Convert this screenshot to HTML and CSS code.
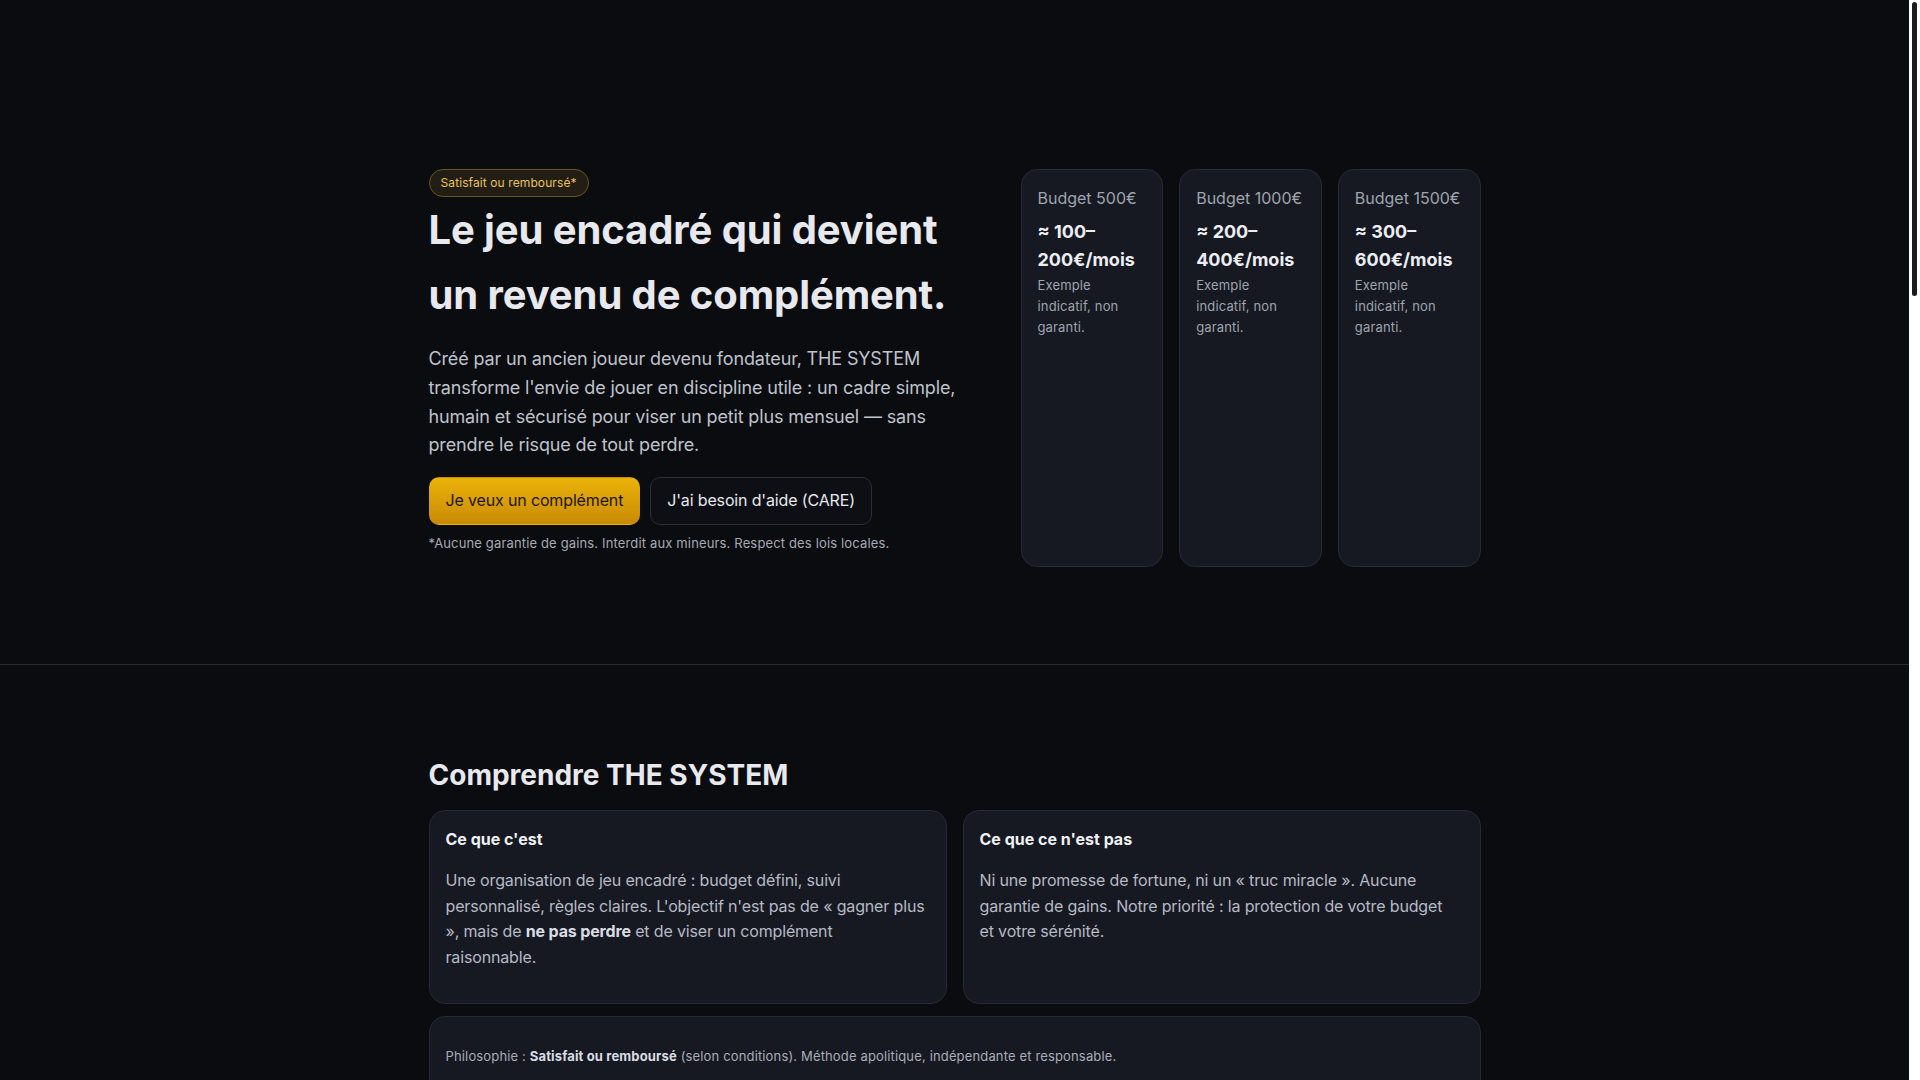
FILE: index.html
```html
<!DOCTYPE html>
<html lang="fr">
<head>
<meta charset="utf-8">
<title>THE SYSTEM — Le jeu encadré</title>
<link rel="stylesheet" href="styles.css">
</head>
<body>
<div class="scrollbar" aria-hidden="true"><div class="scrollbar-thumb"></div></div>
<main class="page">
  <section class="hero">
    <div class="container hero-grid">
      <div class="hero-copy">
        <span class="badge">Satisfait ou remboursé*</span>
        <h1>Le jeu encadré qui devient un revenu de complément.</h1>
        <p class="lead">Créé par un ancien joueur devenu fondateur, THE SYSTEM transforme l'envie de jouer en discipline utile : un cadre simple, humain et sécurisé pour viser un petit plus mensuel — sans prendre le risque de tout perdre.</p>
        <div class="actions">
          <a class="btn btn-primary" href="#offres">Je veux un complément</a>
          <a class="btn btn-ghost" href="#care">J'ai besoin d'aide (CARE)</a>
        </div>
        <p class="fine">*Aucune garantie de gains. Interdit aux mineurs. Respect des lois locales.</p>
      </div>
      <div class="budgets">
        <div class="budget-card">
          <div class="b-label">Budget 500€</div>
          <div class="b-value">≈ 100–200€/mois</div>
          <div class="b-note">Exemple indicatif, non garanti.</div>
        </div>
        <div class="budget-card">
          <div class="b-label">Budget 1000€</div>
          <div class="b-value">≈ 200–400€/mois</div>
          <div class="b-note">Exemple indicatif, non garanti.</div>
        </div>
        <div class="budget-card">
          <div class="b-label">Budget 1500€</div>
          <div class="b-value">≈ 300–600€/mois</div>
          <div class="b-note">Exemple indicatif, non garanti.</div>
        </div>
      </div>
    </div>
  </section>

  <section class="section">
    <div class="container">
      <h2>Comprendre THE SYSTEM</h2>
      <div class="two-col">
        <article class="card">
          <h3>Ce que c'est</h3>
          <p>Une organisation de jeu encadré : budget défini, suivi personnalisé, règles claires. L'objectif n'est pas de « gagner plus », mais de <strong>ne pas perdre</strong> et de viser un complément raisonnable.</p>
        </article>
        <article class="card">
          <h3>Ce que ce n'est pas</h3>
          <p>Ni une promesse de fortune, ni un « truc miracle ». Aucune garantie de gains. Notre priorité : la protection de votre budget et votre sérénité.</p>
        </article>
      </div>
      <div class="card note">
        <p>Philosophie : <strong>Satisfait ou remboursé</strong> (selon conditions). Méthode apolitique, indépendante et responsable.</p>
      </div>
    </div>
  </section>

  <section class="section">
    <div class="container">
      <h2>Comment ça marche</h2>
      <div class="three-col">
        <article class="card">
          <h3>1. Échange</h3>
          <p>Un premier appel pour comprendre votre situation, vos habitudes et définir un budget que vous pouvez vous permettre.</p>
        </article>
        <article class="card">
          <h3>2. Cadre</h3>
          <p>Des règles simples et écrites : mises plafonnées, pauses obligatoires, objectifs mensuels raisonnables.</p>
        </article>
        <article class="card">
          <h3>3. Suivi</h3>
          <p>Un point régulier avec votre accompagnant pour ajuster, prendre du recul et garder le contrôle.</p>
        </article>
      </div>
    </div>
  </section>

  <section class="section" id="offres">
    <div class="container">
      <h2>Les formules</h2>
      <div class="three-col">
        <article class="card">
          <h3>Découverte</h3>
          <p>Budget conseillé : 500€. Suivi mensuel, règles de base et accès à la communauté.</p>
        </article>
        <article class="card">
          <h3>Essentiel</h3>
          <p>Budget conseillé : 1000€. Suivi bimensuel, tableau de bord personnel et alertes de dépassement.</p>
        </article>
        <article class="card">
          <h3>Sérénité</h3>
          <p>Budget conseillé : 1500€. Suivi hebdomadaire, accompagnement prioritaire et bilan trimestriel.</p>
        </article>
      </div>
      <div class="card note">
        <p>Les montants sont des exemples indicatifs. <strong>Aucune garantie de gains.</strong> Ne jouez jamais l'argent dont vous avez besoin.</p>
      </div>
    </div>
  </section>

  <section class="section">
    <div class="container">
      <h2>Ils témoignent</h2>
      <div class="three-col">
        <article class="card">
          <h3>Karim, 34 ans</h3>
          <p>« Avant, je jouais sans limite. Aujourd'hui j'ai un budget fixe et je sais exactement où j'en suis chaque mois. »</p>
        </article>
        <article class="card">
          <h3>Sophie, 41 ans</h3>
          <p>« Le suivi m'a aidée à prendre du recul. Je joue moins, mais mieux, et surtout sans stress. »</p>
        </article>
        <article class="card">
          <h3>Julien, 29 ans</h3>
          <p>« Des règles claires, un accompagnant à l'écoute. Le petit complément est un bonus, pas une obsession. »</p>
        </article>
      </div>
    </div>
  </section>

  <section class="section" id="care">
    <div class="container">
      <h2>CARE : vous n'êtes pas seul</h2>
      <div class="two-col">
        <article class="card">
          <h3>Signaux d'alerte</h3>
          <p>Vous jouez pour vous refaire, vous cachez vos pertes, vous empruntez pour jouer ? Parlons-en, sans jugement.</p>
        </article>
        <article class="card">
          <h3>Nous contacter</h3>
          <p>Notre équipe CARE vous oriente vers les bons interlocuteurs et peut suspendre votre accompagnement à tout moment.</p>
        </article>
      </div>
    </div>
  </section>

  <section class="section">
    <div class="container">
      <h2>Questions fréquentes</h2>
      <div class="faq">
        <article class="card">
          <h3>Est-ce que je peux perdre de l'argent ?</h3>
          <p>Oui. Le jeu comporte toujours un risque. Le cadre sert justement à limiter ce risque à un budget défini à l'avance.</p>
        </article>
        <article class="card">
          <h3>Comment fonctionne le « satisfait ou remboursé » ?</h3>
          <p>Si l'accompagnement ne vous convient pas, les frais de suivi sont remboursés selon les conditions indiquées au contrat.</p>
        </article>
        <article class="card">
          <h3>Qui peut s'inscrire ?</h3>
          <p>Uniquement les personnes majeures, dans le respect des lois de leur pays de résidence.</p>
        </article>
      </div>
    </div>
  </section>

  <section class="section">
    <div class="container">
      <h2>Prêt à jouer autrement ?</h2>
      <div class="card note">
        <p>Réservez un premier échange gratuit et sans engagement. <strong>18+ uniquement.</strong> Jouez avec modération.</p>
      </div>
    </div>
  </section>

  <footer class="footer">
    <div class="container footer-row">
      <span>© THE SYSTEM</span>
      <span>Jeu responsable · Interdit aux mineurs · Mentions légales</span>
    </div>
  </footer>
</main>
</body>
</html>
```

FILE: styles.css
```css
* {
  box-sizing: border-box;
}

html {
  background: #0b0c10;
}

body {
  margin: 0;
  background: #0b0c10;
  color: #e7e8ec;
  font-family: Inter, "Noto Sans", sans-serif;
  font-size: 16px;
  line-height: 1.6;
}

/* page content sits left of the (drawn) scrollbar gutter */
.page {
  display: block;
  margin-right: 11px;
}

.scrollbar {
  position: fixed;
  top: 0;
  right: 0;
  width: 11px;
  height: 100vh;
  background: #ffffff;
  z-index: 10;
}

.scrollbar-thumb {
  position: absolute;
  top: 2px;
  left: 3px;
  width: 5px;
  height: 294px;
  border-radius: 3px;
  background: #1c1c1e;
}

a {
  text-decoration: none;
}

.container {
  max-width: 1100px;
  margin: 0 auto;
  padding: 0 24px;
}

/* HERO */
.hero {
  padding: 169px 0 97px;
  border-bottom: 1px solid #262a33;
}

.hero-grid {
  display: grid;
  grid-template-columns: 1.2fr 1fr;
  gap: 40px;
}

.hero-copy {
  display: flex;
  flex-direction: column;
  align-items: flex-start;
}

.badge {
  font-size: 12px;
  line-height: 18px;
  padding: 4px 11px;
  border: 1px solid #6a5525;
  background: #231e13;
  color: #e8c25e;
  border-radius: 999px;
  letter-spacing: 0.1px;
}

h1 {
  margin: 0;
  font-size: 40px;
  line-height: 65px;
  font-weight: 700;
  color: #e8e9ee;
  letter-spacing: -0.1px;
}

.lead {
  margin: 18px 0 17px;
  font-size: 18px;
  line-height: 1.6;
  color: #bfc3cc;
  letter-spacing: -0.15px;
}

.actions {
  display: flex;
  gap: 10px;
}

.btn {
  display: inline-block;
  padding: 10px 16px;
  font-size: 16px;
  line-height: 1.6;
  border-radius: 10px;
  border: 1px solid transparent;
  letter-spacing: -0.15px;
}

.btn-primary {
  background: linear-gradient(180deg, #ebb309 0%, #c98a05 100%);
  color: #1b1506;
}

.btn-ghost {
  border-color: #2a2e39;
  background: #0d0f14;
  color: #e7e8ec;
}

.fine {
  margin: 8px 0 13px;
  font-size: 13px;
  color: #a6aab3;
  letter-spacing: 0.15px;
}

.budgets {
  display: grid;
  grid-template-columns: repeat(3, 1fr);
  gap: 16px;
}

.budget-card {
  background: #161922;
  border: 1px solid #262a35;
  border-radius: 16px;
  padding: 16px;
}

.b-label {
  color: #9fa4ae;
  font-size: 16px;
}

.b-value {
  margin-top: 6px;
  font-size: 18px;
  font-weight: 700;
  color: #eceef2;
}

.b-note {
  font-size: 13px;
  color: #9fa4ae;
  letter-spacing: 0.15px;
}

/* SECTIONS */
.section {
  padding: 88px 0 96px;
  border-bottom: 1px solid #262a33;
}

h2 {
  margin: 0 0 13px;
  font-size: 28px;
  line-height: 1.6;
  font-weight: 700;
  color: #e8e9ee;
}

.two-col {
  display: grid;
  grid-template-columns: 1fr 1fr;
  gap: 16px;
}

.three-col {
  display: grid;
  grid-template-columns: repeat(3, 1fr);
  gap: 16px;
}

.faq {
  display: grid;
  gap: 12px;
}

.card {
  background: #161922;
  border: 1px solid #262a35;
  border-radius: 16px;
  padding: 16px 20px 16px 16px;
}

.card h3 {
  margin: 0;
  font-size: 16px;
  line-height: 1.6;
  font-weight: 700;
  color: #eef0f3;
}

.card p {
  margin: 15px 0 17px;
  font-size: 16px;
  color: #b6bac4;
  letter-spacing: -0.15px;
}

.card p strong {
  color: #d9dce2;
  font-weight: 700;
}

.note {
  margin-top: 12px;
}

.card.note p {
  margin: 13px 0 14px;
  font-size: 13px;
  color: #a9adb7;
  letter-spacing: 0.15px;
}

.footer {
  padding: 40px 0 48px;
  font-size: 13px;
  color: #8d929c;
}

.footer-row {
  display: flex;
  justify-content: space-between;
}
```
